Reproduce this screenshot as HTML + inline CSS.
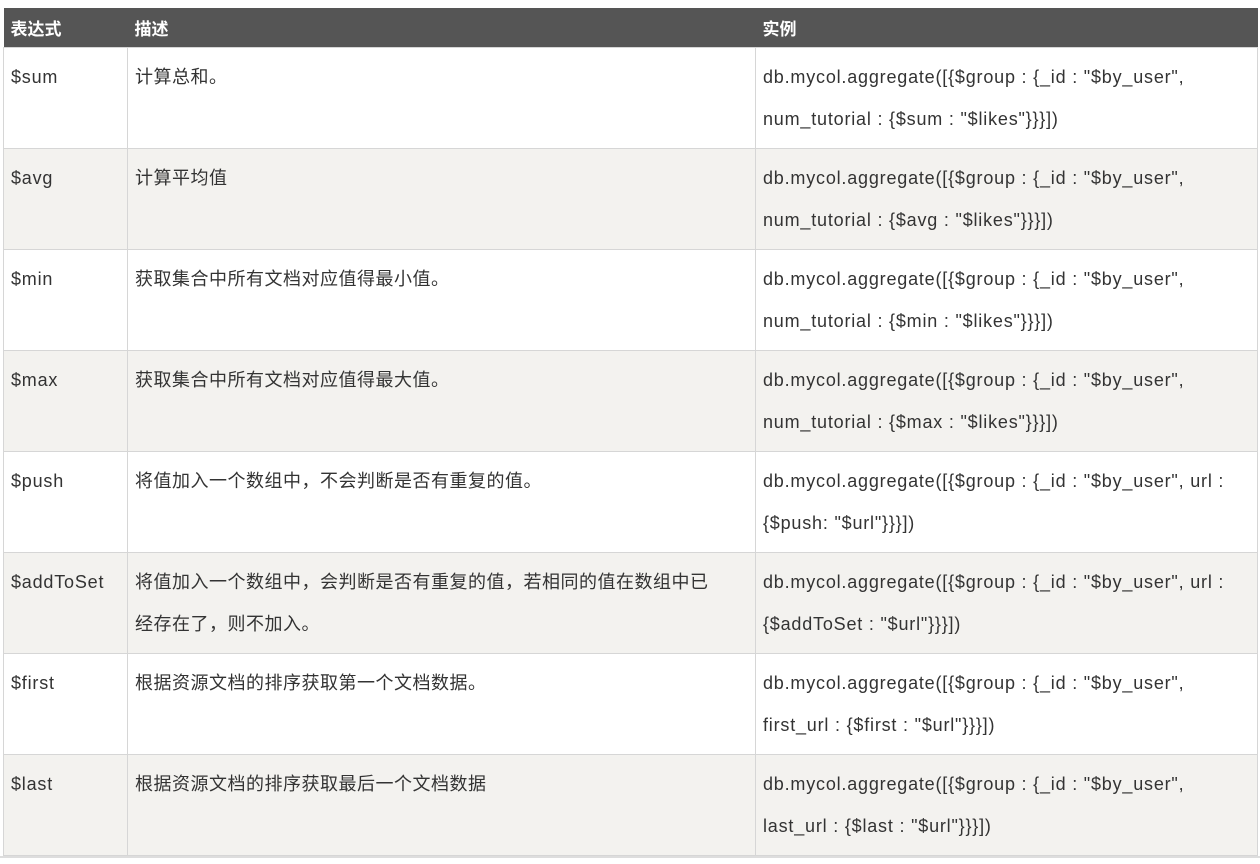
<!DOCTYPE html>
<html><head><meta charset="utf-8"><style>
body{margin:0;background:#fff;width:1260px;height:864px;overflow:hidden;font-family:"Liberation Sans","Noto Sans CJK SC",sans-serif;color:#333;}
table{position:absolute;left:3px;top:8px;border-collapse:collapse;width:1254px;table-layout:fixed;font-size:18px;}
th{background:#555;color:#fff;text-align:left;font-weight:bold;height:39px;padding:0 7px;font-size:17px;}
td{border:1px solid #d6d6d6;padding:8px 7px;line-height:42px;height:82.5px;vertical-align:top;white-space:nowrap;letter-spacing:0.5px;}
td.l{letter-spacing:0.8px;}
tr:nth-child(odd) td{background:#f3f2ef;}
tr:nth-child(even) td{background:#fff;}
.sep{position:absolute;left:0;top:856px;width:1260px;height:2px;background:#ddd;}
</style></head><body>
<table>
<colgroup><col style="width:124px"><col style="width:628px"><col style="width:502px"></colgroup>
<tr><th>表达式</th><th>描述</th><th>实例</th></tr>
<tr><td class="l">$sum</td><td>计算总和。</td><td class="l">db.mycol.aggregate([{$group : {_id : "$by_user",<br>num_tutorial : {$sum : "$likes"}}}])</td></tr>
<tr><td class="l">$avg</td><td>计算平均值</td><td class="l">db.mycol.aggregate([{$group : {_id : "$by_user",<br>num_tutorial : {$avg : "$likes"}}}])</td></tr>
<tr><td class="l">$min</td><td>获取集合中所有文档对应值得最小值。</td><td class="l">db.mycol.aggregate([{$group : {_id : "$by_user",<br>num_tutorial : {$min : "$likes"}}}])</td></tr>
<tr><td class="l">$max</td><td>获取集合中所有文档对应值得最大值。</td><td class="l">db.mycol.aggregate([{$group : {_id : "$by_user",<br>num_tutorial : {$max : "$likes"}}}])</td></tr>
<tr><td class="l">$push</td><td>将值加入一个数组中，不会判断是否有重复的值。</td><td class="l">db.mycol.aggregate([{$group : {_id : "$by_user", url :<br>{$push: "$url"}}}])</td></tr>
<tr><td class="l">$addToSet</td><td>将值加入一个数组中，会判断是否有重复的值，若相同的值在数组中已<br>经存在了，则不加入。</td><td class="l">db.mycol.aggregate([{$group : {_id : "$by_user", url :<br>{$addToSet : "$url"}}}])</td></tr>
<tr><td class="l">$first</td><td>根据资源文档的排序获取第一个文档数据。</td><td class="l">db.mycol.aggregate([{$group : {_id : "$by_user",<br>first_url : {$first : "$url"}}}])</td></tr>
<tr><td class="l">$last</td><td>根据资源文档的排序获取最后一个文档数据</td><td class="l">db.mycol.aggregate([{$group : {_id : "$by_user",<br>last_url : {$last : "$url"}}}])</td></tr>
</table>
<div class="sep"></div>
</body></html>
